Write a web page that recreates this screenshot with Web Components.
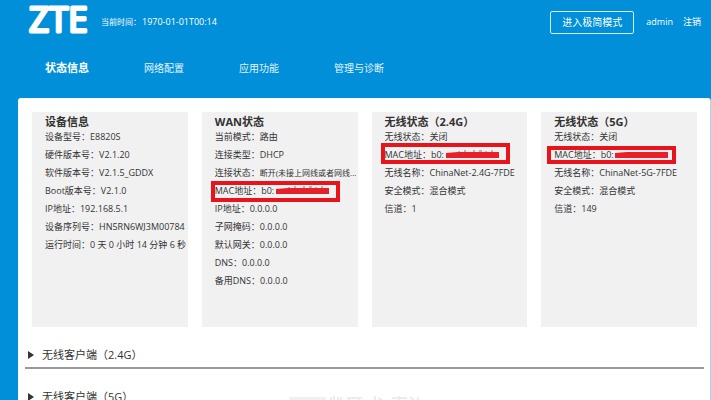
<!DOCTYPE html>
<html lang="zh-CN">
<head>
<meta charset="UTF-8">
<meta name="viewport" content="width=device-width, initial-scale=1">
<title>ZTE</title>
<style>
  html, body {
    margin: 0;
    height: 100%;
    overflow: hidden;
    background: #008fd8;
    font-family: 'Open Sans', 'Noto Sans CJK SC', sans-serif;
    color: #333;
  }
</style>
</head>
<body>
<router-app></router-app>

<script>
// --- Top bar: logo, clock, account links ---
class TopBar extends HTMLElement {
  constructor() {
    super();
    this.attachShadow({ mode: 'open' });
    this.shadowRoot.innerHTML = `
      <style>
        :host {
          display: flex;
          align-items: center;
          height: 44px;
          padding: 0 10px 0 27px;
          color: #fff;
          font-size: 9px;
          line-height: 12px;
        }
        .logo {
          width: 66px;
          height: 44px;
          margin-right: 8px;
        }
        .logo text {
          font-family: 'Liberation Sans Narrow', 'Open Sans', sans-serif;
          font-size: 35px;
          fill: #fff;
          stroke: #fff;
          stroke-width: 3px;
          stroke-linejoin: round;
        }
        .clock { font-size: 8px; flex: 1; }
        .clock time { margin-left: 1px; font-size: 9px; }
        button {
          height: 23px;
          padding: 0 11px;
          margin-right: 12px;
          border: 1px solid #d5edf9;
          border-radius: 2px;
          background: none;
          color: inherit;
          font-family: inherit;
          font-size: 10px;
          line-height: 12px;
        }
        a { color: inherit; text-decoration: none; }
        a + a { margin-left: 10px; }
      </style>
      <svg class="logo" viewBox="0 0 66 44" role="img" aria-label="ZTE">
        <text x="2" y="32">ZTE</text>
      </svg>
      <div class="clock">当前时间：<time>1970-01-01T00:14</time></div>
      <button type="button">进入极简模式</button>
      <a href="#">admin</a>
      <a href="#">注销</a>
    `;
  }
}

// --- Main menu ---
class MainNav extends HTMLElement {
  constructor() {
    super();
    this.attachShadow({ mode: 'open' });
    this.shadowRoot.innerHTML = `
      <style>
        :host { display: block; padding: 14px 45px 20px; }
        nav { display: flex; align-items: center; gap: 55px; height: 20px; }
        ::slotted(a) {
          color: #e3f4fc;
          font-size: 10px;
          line-height: 20px;
          text-decoration: none;
        }
        ::slotted(a.active) { color: #fff; font-size: 11px; font-weight: 700; }
      </style>
      <nav><slot></slot></nav>
    `;
  }
}

// --- Grey card with a title and a list of values ---
class StatusCard extends HTMLElement {
  constructor() {
    super();
    this.attachShadow({ mode: 'open' });
    this.shadowRoot.innerHTML = `
      <style>
        :host {
          display: block;
          min-width: 0;
          padding: 4px 0 0 13px;
          background: #f1f1f1;
        }
        h2 { margin: 0; font-size: 11px; line-height: 12px; font-weight: 700; }
      </style>
      <h2></h2>
      <slot></slot>
    `;
  }

  connectedCallback() {
    this.shadowRoot.querySelector('h2').textContent = this.getAttribute('heading');
  }
}

// --- One "label： value" line, optionally marked and with a covered value ---
class StatusRow extends HTMLElement {
  constructor() {
    super();
    this.attachShadow({ mode: 'open' });
    this.shadowRoot.innerHTML = `
      <style>
        :host {
          display: flex;
          position: relative;
          font-size: 9px;
          line-height: 18px;
          white-space: nowrap;
        }
        :host([long]) .value { font-size: 8px; }
        .frame, .cover { display: none; position: absolute; }
        :host([marked]) .frame {
          display: block;
          left: -4px;
          top: -1px;
          width: 129px;
          height: 21px;
          box-sizing: border-box;
          border: 4px solid #e8141c;
        }
        :host([marked=high]) .frame { top: -3px; }
        :host([marked=slim]) .frame { left: -7px; top: 0; height: 18px; }
        :host([marked]) .cover {
          display: block;
          left: 61px;
          top: 4px;
          width: 53px;
          height: 8px;
        }
        :host([marked=slim]) .cover .rest { display: none; }
      </style>
      <span class="label"></span>
      <span class="value"><slot></slot></span>
      <svg class="cover" viewBox="0 0 53 8" aria-hidden="true">
        <path class="rest" d="M13 1 V3 M18 1 H20 M28 0 V3 M33 1 H36 M40 1 V3 M46 0 V3" fill="none" stroke="#777"/>
        <path d="M0 3 L12 2 H53 V8 H0 Z" fill="#e8202a"/>
      </svg>
      <div class="frame"></div>
    `;
  }

  connectedCallback() {
    this.shadowRoot.querySelector('.label').textContent = this.getAttribute('label') + '：';
  }
}

// --- Collapsed client list ---
class ClientSection extends HTMLElement {
  constructor() {
    super();
    this.attachShadow({ mode: 'open' });
    this.shadowRoot.innerHTML = `
      <style>
        :host { display: block; border-bottom: 2px solid #999; }
        button {
          display: flex;
          align-items: center;
          gap: 8px;
          width: 100%;
          height: 40px;
          padding: 16px 3px 0;
          border: 0;
          background: none;
          color: #333;
          font-family: inherit;
          font-size: 11px;
          line-height: 20px;
        }
        svg { width: 6px; height: 8px; }
      </style>
      <button type="button" aria-expanded="false">
        <svg viewBox="0 0 6 8" aria-hidden="true"><path d="M0 0 L6 4 L0 8 Z" fill="#333"/></svg>
        <slot></slot>
      </button>
    `;
  }
}

class RouterApp extends HTMLElement {
  constructor() {
    super();
    this.attachShadow({ mode: 'open' });
    this.shadowRoot.innerHTML = `
      <style>
        :host { display: flex; flex-direction: column; min-height: 100%; }
        main {
          flex: 1;
          margin-left: 18px;
          padding: 14px 13px 0 14px;
          min-height: 302px;
          box-sizing: border-box;
          background: #fff;
          border-right: 1px solid #a5d9ee;
          border-radius: 3px 3px 0 0;
        }
        .cards {
          display: grid;
          grid-template-columns: repeat(4, minmax(0, 1fr));
          gap: 14px;
          min-height: 215px;
        }
        .clients { margin: 0 -7px; }
        .stamp {
          position: absolute;
          left: 288px;
          bottom: 0;
          width: 136px;
          height: 4px;
        }
      </style>
      <top-bar></top-bar>
      <main-nav>
        <a class="active" href="#">状态信息</a>
        <a href="#">网络配置</a>
        <a href="#">应用功能</a>
        <a href="#">管理与诊断</a>
      </main-nav>
      <main>
        <div class="cards">
          <status-card heading="设备信息">
            <status-row label="设备型号">E8820S</status-row>
            <status-row label="硬件版本号">V2.1.20</status-row>
            <status-row label="软件版本号">V2.1.5_GDDX</status-row>
            <status-row label="Boot版本号">V2.1.0</status-row>
            <status-row label="IP地址">192.168.5.1</status-row>
            <status-row label="设备序列号">HN5RN6WJ3M00784</status-row>
            <status-row label="运行时间">0 天 0 小时 14 分钟 6 秒</status-row>
          </status-card>
          <status-card heading="WAN状态">
            <status-row label="当前模式">路由</status-row>
            <status-row label="连接类型">DHCP</status-row>
            <status-row label="连接状态" long>断开(未接上网线或者网线...</status-row>
            <status-row label="MAC地址" marked>b0:</status-row>
            <status-row label="IP地址">0.0.0.0</status-row>
            <status-row label="子网掩码">0.0.0.0</status-row>
            <status-row label="默认网关">0.0.0.0</status-row>
            <status-row label="DNS">0.0.0.0</status-row>
            <status-row label="备用DNS">0.0.0.0</status-row>
          </status-card>
          <status-card heading="无线状态（2.4G）">
            <status-row label="无线状态">关闭</status-row>
            <status-row label="MAC地址" marked="high">b0:</status-row>
            <status-row label="无线名称">ChinaNet-2.4G-7FDE</status-row>
            <status-row label="安全模式">混合模式</status-row>
            <status-row label="信道">1</status-row>
          </status-card>
          <status-card heading="无线状态（5G）">
            <status-row label="无线状态">关闭</status-row>
            <status-row label="MAC地址" marked="slim">b0:</status-row>
            <status-row label="无线名称">ChinaNet-5G-7FDE</status-row>
            <status-row label="安全模式">混合模式</status-row>
            <status-row label="信道">149</status-row>
          </status-card>
        </div>
        <div class="clients">
          <client-section>无线客户端（2.4G）</client-section>
          <client-section>无线客户端（5G）</client-section>
        </div>
      </main>
      <svg class="stamp" viewBox="0 0 136 4" aria-hidden="true">
        <path d="M1 4 V2 Q1 1 3 1 H36 Q38 1 38 2 V4 Z" fill="#f0f0f0"/>
        <path d="M43 1 V4 M46 0 V4 M50 1 V4 M54 1 L52 4 M59 2 H74 M61 2 V4 M71 2 V4 M87 0 V4 M90 2 L94 4 M104 2 H119 M111 0 V4 M122 1 L126 4 M130 1 V4" fill="none" stroke="#ececec" stroke-width="2"/>
      </svg>
    `;
  }
}

customElements.define('top-bar', TopBar);
customElements.define('main-nav', MainNav);
customElements.define('status-card', StatusCard);
customElements.define('status-row', StatusRow);
customElements.define('client-section', ClientSection);
customElements.define('router-app', RouterApp);
</script>
</body>
</html>
